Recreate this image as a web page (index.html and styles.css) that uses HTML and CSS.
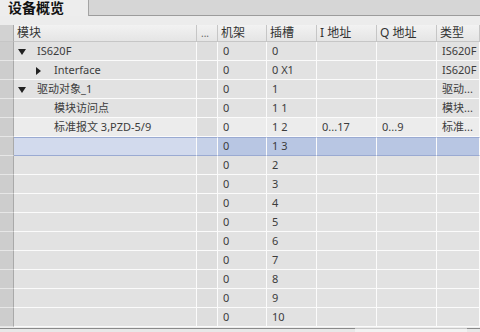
FILE: index.html
```html
<!DOCTYPE html>
<html lang="zh">
<head>
  <meta charset="UTF-8">
  <title>设备概览</title>
  <link rel="stylesheet" href="styles.css">
</head>
<body>

<div class="tabbar">
  <div class="tab">设备概览</div>
  <div class="tab-rest"></div>
</div>
<div class="spacer"></div>

<div class="overview">
  <div class="row head">
    <div class="gutter"></div>
    <div class="cell">模块</div>
    <div class="cell dots">...</div>
    <div class="cell">机架</div>
    <div class="cell">插槽</div>
    <div class="cell">I 地址</div>
    <div class="cell">Q 地址</div>
    <div class="cell">类型</div>
  </div>

  <div class="row">
    <div class="gutter"></div>
    <div class="cell name"><span class="twisty down"></span>IS620F</div>
    <div class="cell dots"></div>
    <div class="cell">0</div>
    <div class="cell">0</div>
    <div class="cell"></div>
    <div class="cell"></div>
    <div class="cell">IS620F</div>
  </div>
  <div class="row">
    <div class="gutter"></div>
    <div class="cell name lvl1"><span class="twisty right"></span>Interface</div>
    <div class="cell dots"></div>
    <div class="cell">0</div>
    <div class="cell">0 X1</div>
    <div class="cell"></div>
    <div class="cell"></div>
    <div class="cell">IS620F</div>
  </div>
  <div class="row">
    <div class="gutter"></div>
    <div class="cell name"><span class="twisty down"></span>驱动对象_1</div>
    <div class="cell dots"></div>
    <div class="cell">0</div>
    <div class="cell">1</div>
    <div class="cell"></div>
    <div class="cell"></div>
    <div class="cell">驱动...</div>
  </div>
  <div class="row">
    <div class="gutter"></div>
    <div class="cell name lvl1"><span class="twisty"></span>模块访问点</div>
    <div class="cell dots"></div>
    <div class="cell">0</div>
    <div class="cell">1 1</div>
    <div class="cell"></div>
    <div class="cell"></div>
    <div class="cell">模块...</div>
  </div>
  <div class="row hover">
    <div class="gutter"></div>
    <div class="cell name lvl1"><span class="twisty"></span>标准报文 3,PZD-5/9</div>
    <div class="cell dots"></div>
    <div class="cell">0</div>
    <div class="cell">1 2</div>
    <div class="cell">0...17</div>
    <div class="cell">0...9</div>
    <div class="cell">标准...</div>
  </div>
  <div class="row selected">
    <div class="gutter"></div>
    <div class="cell name"></div>
    <div class="cell dots"></div>
    <div class="cell">0</div>
    <div class="cell">1 3</div>
    <div class="cell"></div>
    <div class="cell"></div>
    <div class="cell"></div>
  </div>
  <div class="row"><div class="gutter"></div><div class="cell"></div><div class="cell dots"></div><div class="cell">0</div><div class="cell">2</div><div class="cell"></div><div class="cell"></div><div class="cell"></div></div>
  <div class="row"><div class="gutter"></div><div class="cell"></div><div class="cell dots"></div><div class="cell">0</div><div class="cell">3</div><div class="cell"></div><div class="cell"></div><div class="cell"></div></div>
  <div class="row"><div class="gutter"></div><div class="cell"></div><div class="cell dots"></div><div class="cell">0</div><div class="cell">4</div><div class="cell"></div><div class="cell"></div><div class="cell"></div></div>
  <div class="row"><div class="gutter"></div><div class="cell"></div><div class="cell dots"></div><div class="cell">0</div><div class="cell">5</div><div class="cell"></div><div class="cell"></div><div class="cell"></div></div>
  <div class="row"><div class="gutter"></div><div class="cell"></div><div class="cell dots"></div><div class="cell">0</div><div class="cell">6</div><div class="cell"></div><div class="cell"></div><div class="cell"></div></div>
  <div class="row"><div class="gutter"></div><div class="cell"></div><div class="cell dots"></div><div class="cell">0</div><div class="cell">7</div><div class="cell"></div><div class="cell"></div><div class="cell"></div></div>
  <div class="row"><div class="gutter"></div><div class="cell"></div><div class="cell dots"></div><div class="cell">0</div><div class="cell">8</div><div class="cell"></div><div class="cell"></div><div class="cell"></div></div>
  <div class="row"><div class="gutter"></div><div class="cell"></div><div class="cell dots"></div><div class="cell">0</div><div class="cell">9</div><div class="cell"></div><div class="cell"></div><div class="cell"></div></div>
  <div class="row"><div class="gutter"></div><div class="cell"></div><div class="cell dots"></div><div class="cell">0</div><div class="cell">10</div><div class="cell"></div><div class="cell"></div><div class="cell"></div></div>
</div>

<div class="hscroll">
  <div class="track"></div>
  <div class="thumb"></div>
  <div class="track-end"></div>
</div>

</body>
</html>
```

FILE: styles.css
```css
/* Device overview table */
body {
  margin: 0;
  padding: 0;
  width: 480px;
  height: 332px;
  overflow: hidden;
  background-color: #ececec;
  font-family: 'Noto Sans', 'Noto Sans CJK SC', sans-serif;
  font-size: 11px;
  color: #3c3c3c;
}
.tabbar {
  display: flex;
  height: 16px;
}
.tab {
  width: 89px;
  height: 16px;
  border-right: 1px solid #a4a4a4;
  background-color: #ededed;
  font-size: 14px;
  font-weight: bold;
  color: #111;
  line-height: 16px;
  padding-left: 8px;
  box-sizing: border-box;
}
.tab-rest {
  flex: 1;
  background-color: #d6d6d6;
  border-bottom: 1px solid #9c9c9c;
}
.spacer {
  height: 9px;
}
.row {
  display: grid;
  grid-template-columns: 14px 183px 21px 49px 50px 60px 60px 43px;
  height: 19px;
  background-color: #e2e2e2;
}
.row .cell {
  box-sizing: border-box;
  height: 19px;
  line-height: 18px;
  border-right: 1px solid #fbfbfb;
  border-bottom: 1px solid #fbfbfb;
  padding-left: 5px;
  white-space: nowrap;
  overflow: hidden;
}
.gutter {
  background-color: #cdcdcd;
  border-right: 1px solid #a9a9a9;
  border-bottom: 1px solid #e6e6e6;
}
.cell.dots {
  background-color: #dedede;
}
.row.head {
  height: 17px;
  background: linear-gradient(#f2f2f2, #e4e4e4);
}
.row.head .cell {
  height: 17px;
  line-height: 16px;
  border-right: 1px solid #c6c6c6;
  border-bottom: 1px solid #c6c6c6;
  font-size: 12px;
  color: #333;
  padding-left: 3px;
}
.row.head .cell.dots {
  background: none;
  color: #666;
  font-size: 10px;
  padding-left: 4px;
}
.row.head .gutter {
  background-color: #d2d2d2;
  border-bottom: 1px solid #c6c6c6;
}
.cell.name {
  padding-left: 4px;
}
.cell.lvl1 {
  padding-left: 21px;
}
.twisty {
  display: inline-block;
  width: 19px;
  height: 8px;
  vertical-align: -1px;
  position: relative;
}
.twisty.down::before {
  content: '';
  position: absolute;
  left: 0;
  top: 1px;
  border-left: 4px solid transparent;
  border-right: 4px solid transparent;
  border-top: 6px solid #222;
}
.twisty.right::before {
  content: '';
  position: absolute;
  left: 1px;
  top: 0;
  border-top: 4px solid transparent;
  border-bottom: 4px solid transparent;
  border-left: 5px solid #222;
}
.row.hover .cell {
  background-color: #ececec;
}
.row.hover .cell.dots {
  background-color: #dedede;
}
.row.selected {
  background-color: #b8c6e3;
}
.row.selected .cell {
  border-top: 1px solid #9aaad2;
  border-bottom: 1px solid #9aaad2;
  line-height: 16px;
}
.row.selected .cell.name {
  background-color: #d2daed;
}
.row.selected .cell.dots {
  background-color: #c6d1e8;
}
.hscroll {
  display: flex;
  height: 5px;
  margin-top: 1px;
  border-top: 1px solid #8a8a8a;
  background-color: #e8e8e8;
}
.hscroll .track {
  width: 355px;
}
.hscroll .thumb {
  width: 112px;
  border-top: 1px solid #c8c8c8;
  margin-top: -1px;
  background-color: #f2f2f2;
}
.hscroll .track-end {
  flex: 1;
}
```
